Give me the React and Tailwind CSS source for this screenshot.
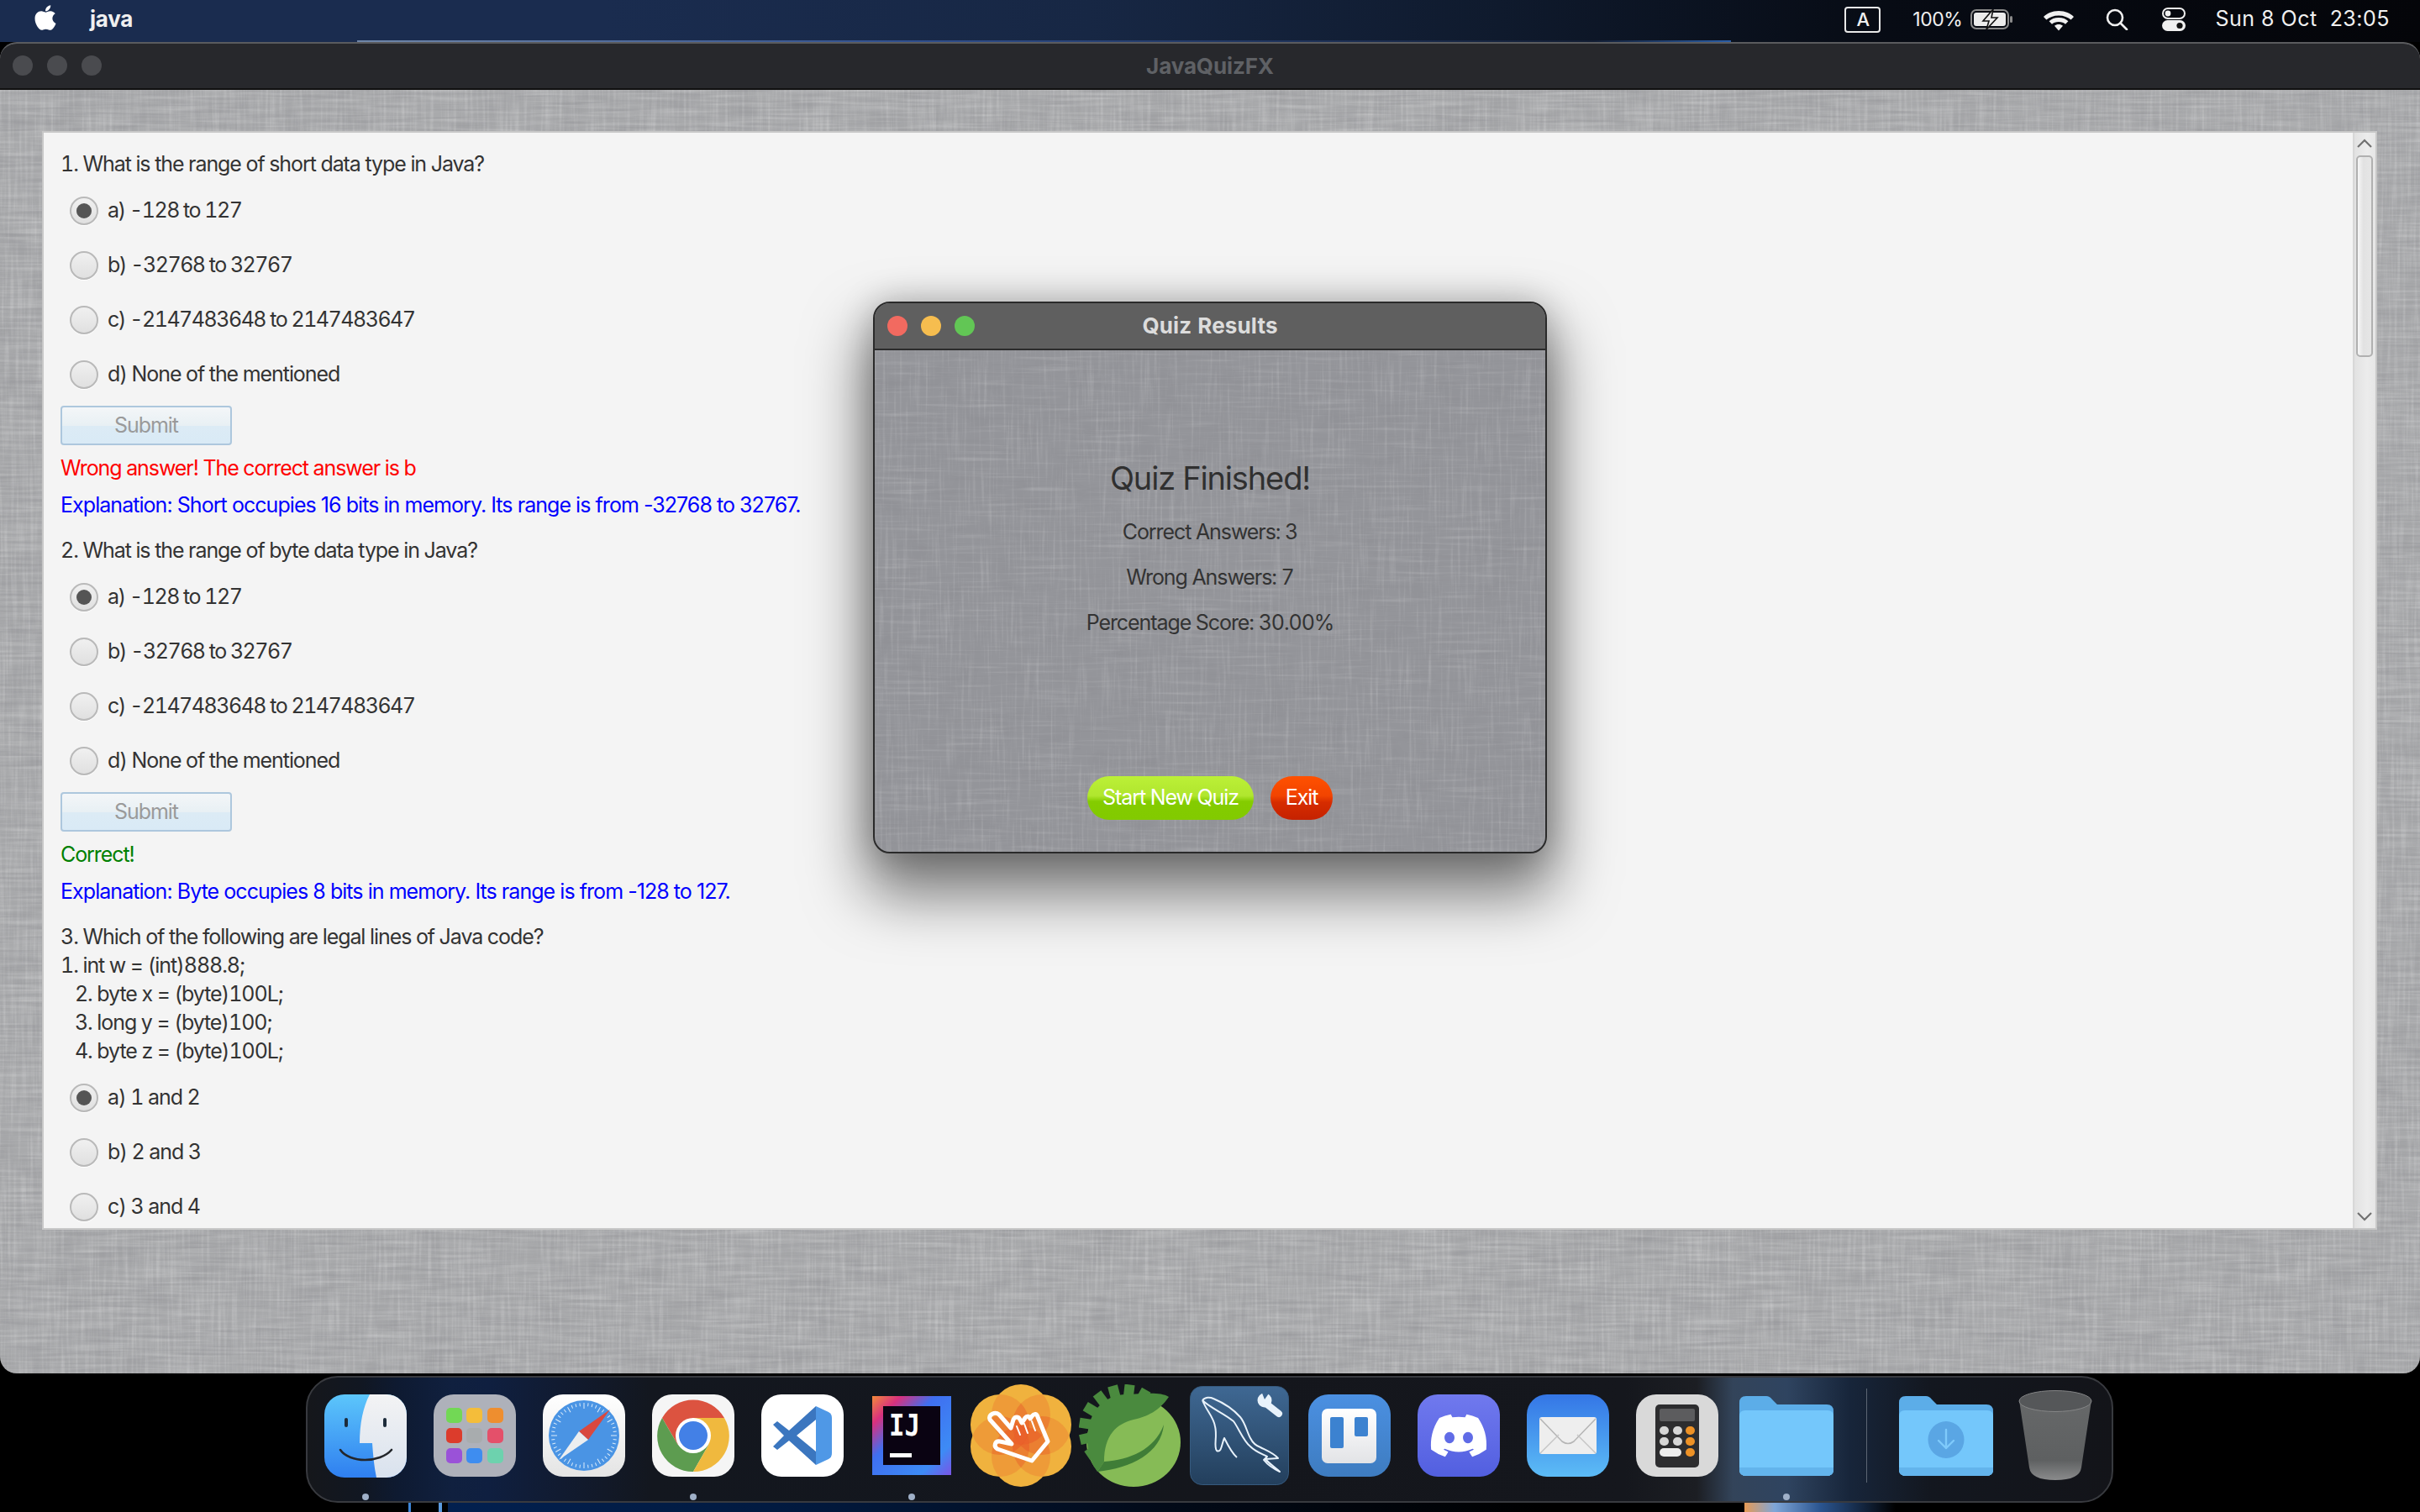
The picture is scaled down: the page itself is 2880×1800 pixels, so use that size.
import React, { useId } from "react";
import { FaApple, FaDiscord } from "react-icons/fa";

function Linen({ strength = 1 }) {
  const id = useId().replace(/:/g, "");
  const s = strength;
  return (
    <svg className="absolute inset-0 h-full w-full" aria-hidden="true">
      <filter id={id + "v"} x="0" y="0" width="100%" height="100%">
        <feTurbulence type="fractalNoise" baseFrequency="0.3 0.014" numOctaves="2" seed="4" />
        <feColorMatrix values={`0 0 0 0 1 0 0 0 0 1 0 0 0 0 1 ${0.42 * s} 0 0 0 -0.18`} />
      </filter>
      <filter id={id + "h"} x="0" y="0" width="100%" height="100%">
        <feTurbulence type="fractalNoise" baseFrequency="0.014 0.3" numOctaves="2" seed="9" />
        <feColorMatrix values={`0 0 0 0 0.25 0 0 0 0 0.25 0 0 0 0 0.27 ${0.7 * s} 0 0 0 -0.29`} />
      </filter>
      <filter id={id + "w"} x="0" y="0" width="100%" height="100%">
        <feTurbulence type="fractalNoise" baseFrequency="0.012 0.28" numOctaves="2" seed="21" />
        <feColorMatrix values={`0 0 0 0 1 0 0 0 0 1 0 0 0 0 1 ${0.42 * s} 0 0 0 -0.19`} />
      </filter>
      <filter id={id + "b"} x="0" y="0" width="100%" height="100%">
        <feTurbulence type="fractalNoise" baseFrequency="0.03 0.04" numOctaves="2" seed="2" />
        <feColorMatrix values={`0 0 0 0 0.2 0 0 0 0 0.2 0 0 0 0 0.22 ${0.4 * s} 0 0 0 -0.17`} />
      </filter>
      <rect width="100%" height="100%" filter={`url(#${id}b)`} />
      <rect width="100%" height="100%" filter={`url(#${id}v)`} />
      <rect width="100%" height="100%" filter={`url(#${id}h)`} />
      <rect width="100%" height="100%" filter={`url(#${id}w)`} />
    </svg>
  );
}

function Radio({ on, label }) {
  const numeric = /\d{3}/.test(label);
  return (
    <div className="flex h-[65px] items-center pl-[11px]">
      <div className="flex h-[34px] w-[34px] items-center justify-center rounded-full border-2 border-[#b9b9b9] bg-[linear-gradient(180deg,#f0f0f0,#e0e0e0)] shadow-[0_1px_0_#fff]">
        {on && <div className="h-[18px] w-[18px] rounded-full bg-[#555]" />}
      </div>
      <span className={numeric ? "ml-[11px] tracking-[-0.06em]" : "ml-[11px]"}>{label}</span>
    </div>
  );
}

function Question({ lines, opts, result, resultColor, explanation }) {
  return (
    <div className="mb-[19px]">
      {lines.map((l) => (
        <div key={l} className="h-[34px] whitespace-pre leading-[34px]">{l}</div>
      ))}
      <div className="mt-[6px]">
        {opts.map((o, i) => (
          <Radio key={o} on={i === 0} label={o} />
        ))}
      </div>
      {explanation && (
        <>
          <button className="mt-[5px] flex h-[47px] w-[204px] items-center justify-center rounded-[4px] border-2 border-[#adc7dd] bg-[linear-gradient(180deg,#f3f6f8_0%,#e8f0f4_50%,#dcebf5_52%,#d9eaf6_100%)] text-[#9a9a9a]">
            Submit
          </button>
          <div className={`mt-[10px] h-[34px] leading-[34px] ${resultColor}`}>{result}</div>
          <div className="mt-[10px] h-[34px] leading-[34px] tracking-[-0.038em] text-[#0000ff] [font-variant-numeric:normal]">{explanation}</div>
          <div className="h-[1px]" />
        </>
      )}
    </div>
  );
}

function Scrollbar() {
  return (
    <div className="relative w-[27px] shrink-0 border-l-2 border-[#d8d8d8] bg-[linear-gradient(90deg,#e2e2e2,#ececec_60%,#e6e6e6)]">
      <svg className="absolute left-[3px] top-[7px] h-[12px] w-[18px]" viewBox="0 0 18 12" fill="none" stroke="#707070" strokeWidth="2.2">
        <path d="M1 10 L9 2 L17 10" />
      </svg>
      <div className="absolute left-[2px] top-[27px] h-[240px] w-[20px] rounded-[5px] border-2 border-[#b0b0b0] bg-[linear-gradient(90deg,#f7f7f7,#e2e2e2_40%,#e6e6e6)]" />
      <svg className="absolute bottom-[8px] left-[3px] h-[12px] w-[18px]" viewBox="0 0 18 12" fill="none" stroke="#707070" strokeWidth="2.2">
        <path d="M1 2 L9 10 L17 2" />
      </svg>
    </div>
  );
}

function MenuBar() {
  return (
    <div className="flex h-[50px] shrink-0 items-center bg-[linear-gradient(90deg,#1a2c4f_0%,#1a2c4f_25%,#172744_45%,#0f1a2d_62%,#070b14_78%,#040509_100%)] pb-[4px] text-[#f0f0f0] [font-variant-numeric:normal]">
      <FaApple className="ml-[38px] h-[34px] w-[32px] -translate-y-[2px] text-white" />
      <span className="ml-[37px] text-[26px] font-bold leading-none tracking-[-0.01em]">java</span>
      <div className="ml-auto flex h-[31px] w-[43px] items-center justify-center rounded-[4px] border-2 border-[#e8e8e8] text-[22px] font-medium">A</div>
      <span className="ml-[38px] text-[23px] tracking-[-0.02em]">100%</span>
      <svg className="ml-[10px] h-[24px] w-[51px]" viewBox="0 0 51 24" fill="none">
        <rect x="1" y="1" width="44" height="22" rx="6" stroke="#8a8a8a" strokeWidth="2" />
        <rect x="4" y="4" width="38" height="16" rx="3" fill="#ececec" />
        <rect x="47" y="8" width="3" height="8" rx="1.5" fill="#8a8a8a" />
        <path d="M27 0 L15 14 H22 L19 24 L32 10 H25 Z" fill="#ececec" stroke="#111" strokeWidth="1.6" />
      </svg>
      <svg className="ml-[35px] h-[27px] w-[38px]" viewBox="0 0 38 27" fill="#f0f0f0">
        <path d="M19 3 C27 3 33 6 37 10 L33.6 13.6 C30 10.4 25 8.4 19 8.4 C13 8.4 8 10.4 4.4 13.6 L1 10 C5 6 11 3 19 3Z" />
        <path d="M19 11 C24 11 27.6 12.6 30.4 15.2 L27 18.8 C25 17 22.4 16 19 16 C15.6 16 13 17 11 18.8 L7.6 15.2 C10.4 12.6 14 11 19 11Z" />
        <path d="M19 19 C21 19 22.6 19.6 24 20.8 L19 26.4 L14 20.8 C15.4 19.6 17 19 19 19Z" />
      </svg>
      <svg className="ml-[37px] h-[26px] w-[27px]" viewBox="0 0 27 26" fill="none" stroke="#f0f0f0" strokeWidth="2.6">
        <circle cx="11" cy="11" r="9" />
        <path d="M17.5 17.5 L25 25" strokeLinecap="round" />
      </svg>
      <svg className="ml-[40px] h-[28px] w-[28px]" viewBox="0 0 28 28">
        <rect x="1" y="1" width="26" height="12" rx="6" fill="none" stroke="#f0f0f0" strokeWidth="2" />
        <circle cx="7" cy="7" r="3.4" fill="#f0f0f0" />
        <rect x="0" y="15" width="28" height="13" rx="6.5" fill="#f0f0f0" />
        <circle cx="21" cy="21.5" r="3.6" fill="#111" />
      </svg>
      <span className="ml-[35px] text-[25px] tracking-[0.02em]">Sun 8 Oct</span>
      <span className="ml-[15px] mr-[36px] text-[25px] tracking-[0.02em]">23:05</span>
    </div>
  );
}

function Squircle({ className, children }) {
  return <div className={`relative h-[98px] w-[98px] overflow-hidden rounded-[24px] ${className}`}>{children}</div>;
}

function Finder() {
  return (
    <svg width="98" height="99" viewBox="0 0 98 99">
      <defs>
        <linearGradient id="fa" x1="0" y1="0" x2="0" y2="1"><stop offset="0" stopColor="#5cc6fb" /><stop offset="1" stopColor="#2f7ff0" /></linearGradient>
        <linearGradient id="fb" x1="0" y1="0" x2="0" y2="1"><stop offset="0" stopColor="#f3f3f4" /><stop offset="1" stopColor="#d9e2ee" /></linearGradient>
      </defs>
      <rect width="98" height="99" rx="24" fill="url(#fa)" />
      <path d="M54 0 H74 A24 24 0 0 1 98 24 V75 A24 24 0 0 1 74 99 H62 C59 85 58 72 57 58 H42 C42 35 46 15 54 0Z" fill="url(#fb)" />
      <rect x="24" y="28" width="4" height="11" rx="2" fill="#1d2b3a" />
      <rect x="70" y="28" width="4" height="11" rx="2" fill="#1d2b3a" />
      <path d="M19 66 C30 82 66 82 80 66" fill="none" stroke="#23262b" strokeWidth="2.6" strokeLinecap="round" />
    </svg>
  );
}

function Launchpad() {
  const colors = ["bg-[#72d855]", "bg-[#f4bd3a]", "bg-[#ee8e2f]", "bg-[#dc3c2c]", "bg-[#a8acae]", "bg-[#e4506a]", "bg-[#9a52d8]", "bg-[#3e8df0]", "bg-[#6dd2ae]"];
  return (
    <Squircle className="bg-[#aeb1ba]">
      <div className="grid h-full grid-cols-3 content-center justify-center gap-x-[5px] gap-y-[6px] px-[15px]">
        {colors.map((c) => <div key={c} className={`h-[18px] w-[19px] rounded-[5px] ${c}`} />)}
      </div>
    </Squircle>
  );
}

function Safari() {
  const ticks = Array.from({ length: 48 }, (_, i) => i * 7.5);
  return (
    <Squircle className="bg-[linear-gradient(180deg,#ffffff,#e4e4e4)]">
      <svg width="98" height="98" viewBox="0 0 98 98">
        <circle cx="49" cy="49" r="42" fill="#4a94e4" />
        {ticks.map((t) => (
          <line key={t} x1="49" y1="10" x2="49" y2={t % 30 === 0 ? 17 : 14} stroke="#dcecfa" strokeWidth="1" transform={`rotate(${t} 49 49)`} />
        ))}
        <path d="M80 18 L43 44 L54 54 Z" fill="#d9483f" />
        <path d="M19 78 L43 44 L54 54 Z" fill="#eceef0" />
      </svg>
    </Squircle>
  );
}

function Chrome() {
  return (
    <Squircle className="bg-[#f5f5f5]">
      <svg width="98" height="98" viewBox="0 0 98 98">
        <path d="M86 28 A42.5 42.5 0 0 0 12 28 L30.7 60 L49 28 Z" fill="#dc5340" />
        <path d="M12 28 A42.5 42.5 0 0 0 49 92 L67.3 60 L30.7 60 Z" fill="#5d9c50" />
        <path d="M86 28 H49 L67.3 60 L49 92 A42.5 42.5 0 0 0 86 28Z" fill="#f0b93e" />
        <circle cx="49" cy="49" r="21" fill="#fff" />
        <circle cx="49" cy="49" r="17" fill="#4380e6" />
      </svg>
    </Squircle>
  );
}

function VSCode() {
  return (
    <Squircle className="bg-white">
      <svg width="98" height="98" viewBox="0 0 98 98">
        <path d="M65 14 L80 21 Q84 23 84 28 V70 Q84 75 80 77 L65 84 Z" fill="#4f98e6" />
        <path d="M65 14 L33 43 L19 32 L14 36 L27 49 L14 62 L19 66 L33 55 L65 84 L65 68 L42 49 L65 30 Z" fill="#3b76bf" />
      </svg>
    </Squircle>
  );
}

function IntelliJ() {
  return (
    <svg width="94" height="94" viewBox="0 0 94 94">
      <defs>
        <linearGradient id="ij" x1="0" y1="0" x2="1" y2="1">
          <stop offset="0" stopColor="#f28a3a" /><stop offset="0.18" stopColor="#d9317e" /><stop offset="0.4" stopColor="#3f6ff0" /><stop offset="0.8" stopColor="#3d8bf5" /><stop offset="1" stopColor="#7a55e6" />
        </linearGradient>
      </defs>
      <rect width="94" height="94" fill="url(#ij)" />
      <rect x="13" y="12" width="68" height="70" fill="#0a0312" />
      <text x="20" y="47" fill="#fff" fontFamily="'DejaVu Sans Mono',monospace" fontWeight="700" fontSize="36" textLength="37" lengthAdjust="spacingAndGlyphs" letterSpacing="0">IJ</text>
      <rect x="21" y="68" width="26" height="5" fill="#fff" />
    </svg>
  );
}

function Gesture() {
  const spots = [[61, 36], [86, 48], [86, 74], [61, 86], [36, 74], [36, 48]];
  return (
    <svg width="122" height="122" viewBox="0 0 122 122">
      <defs>
        {spots.map(([x, y], i) => (
          <clipPath key={i} id={`gc${i}`}><ellipse cx={x} cy={y} rx="35" ry="36" /></clipPath>
        ))}
      </defs>
      {spots.map(([x, y], i) => <ellipse key={i} cx={x} cy={y} rx="35" ry="36" fill="#f0b23e" />)}
      {spots.map(([x, y], i) =>
        spots.map(([x2, y2], j) =>
          j > i ? <ellipse key={`${i}-${j}`} cx={x2} cy={y2} rx="35" ry="36" fill="#e8602a" fillOpacity="0.28" clipPath={`url(#gc${i})`} /> : null
        )
      )}
      <path d="M24 42 C22 36 30 32 35 36 L49 52 L52 42 C54 38 58 38 60 42 L62 46 L66 40 C68 37 71 38 72 41 L74 38 C77 34 80 35 81 39 L93 68 L74 91 L33 77 C28 74 30 67 36 68 L50 71 Z" fill="none" stroke="#fff" strokeWidth="5" strokeLinejoin="round" />
      <path d="M56 50 L60 60 M65 47 L69 58 M74 44 L78 55" stroke="#fff" strokeWidth="2" strokeLinecap="round" />
    </svg>
  );
}

function Spring() {
  const teeth = [-125, -103, -81, -59, -37, -15, 7, 29];
  return (
    <svg width="122" height="122" viewBox="0 0 122 122">
      <ellipse cx="65" cy="69" rx="56" ry="53" fill="#86bb56" />
      {teeth.map((t) => (
        <rect key={t} x="48" y="0" width="12" height="18" fill="#4a8a3e" transform={`rotate(${t} 54 54)`} />
      ))}
      <path d="M107 15 C95 32 82 38 65 42 C45 47 30 60 30 92 L22 104 C10 88 8 70 12 50 C16 28 34 12 56 12 C75 12 95 8 107 15Z" fill="#4a8a3e" />
      <path d="M30 92 C60 90 90 78 101 48 C98 82 62 100 22 104 Z" fill="#3f7d37" />
    </svg>
  );
}

function MySQL() {
  return (
    <svg width="118" height="118" viewBox="0 0 118 118">
      <defs>
        <linearGradient id="my" x1="0" y1="0" x2="0" y2="1"><stop offset="0" stopColor="#3f6893" /><stop offset="1" stopColor="#233f5c" /></linearGradient>
      </defs>
      <rect x="0.5" y="0.5" width="117" height="117" rx="14" fill="url(#my)" stroke="#365a7e" />
      <path d="M15 17 C18 13 24 13 28 15 C40 20 52 28 60 37 C66 44 68 55 72 62 C75 68 78 71 84 73 C92 77 100 80 105 86 L90 87 C95 93 102 97 107 102 C98 98 92 93 88 88 L92 84 C84 80 78 78 72 72 C64 66 58 50 52 42 C40 32 24 26 15 17 M15 17 C20 30 28 36 30 48 C33 60 28 72 32 77 C38 80 38 68 41 62 C46 72 50 80 56 85" fill="none" stroke="#e8f2fb" strokeWidth="2" strokeLinejoin="round" />
      <line x1="92" y1="22" x2="106" y2="33" stroke="#e8f2fb" strokeWidth="8" strokeLinecap="round" />
      <circle cx="89" cy="17" r="8.5" fill="#e8f2fb" />
      <path d="M89 16 L85 6 H96 Z" fill="#3c6590" />
    </svg>
  );
}

function Trello() {
  return (
    <Squircle className="bg-[linear-gradient(180deg,#4b90e2,#3e7cc0)]">
      <div className="absolute left-[16px] top-[17px] flex h-[65px] w-[65px] justify-between rounded-[7px] bg-[linear-gradient(180deg,#ffffff,#e2e3e6)] p-[10px]">
        <div className="h-[37px] w-[16px] rounded-[2px] bg-[#3c82d0]" />
        <div className="h-[23px] w-[16px] rounded-[2px] bg-[#3c82d0]" />
      </div>
    </Squircle>
  );
}

function Discord() {
  return (
    <Squircle className="flex items-center justify-center bg-[linear-gradient(180deg,#7079ee,#525fe0)]">
      <FaDiscord className="h-[72px] w-[72px] text-white" />
    </Squircle>
  );
}

function Mail() {
  return (
    <Squircle className="bg-[linear-gradient(180deg,#3476e6,#5cbcf6)]">
      <svg width="98" height="98" viewBox="0 0 98 98">
        <rect x="15" y="27" width="68" height="44" rx="3" fill="#eeeeee" />
        <path d="M16 29 L42 56 Q49 61 56 56 L82 29" fill="none" stroke="#b5b5b5" strokeWidth="1.6" />
        <path d="M16 70 L38 48 M82 70 L60 48" fill="none" stroke="#c4c4c4" strokeWidth="1.4" />
      </svg>
    </Squircle>
  );
}

function Calculator() {
  return (
    <Squircle className="flex items-center justify-center bg-[#d9d9d9]">
      <div className="flex h-[75px] w-[52px] flex-col gap-[3px] rounded-[5px] bg-[#2d2d2f] p-[5px]">
        <div className="mb-[3px] h-[15px] rounded-[2px] bg-[#5c5c5e]" />
        <div className="flex justify-between"><i className="h-[10px] w-[11px] rounded-full bg-[#d6d6d6]" /><i className="h-[10px] w-[11px] rounded-full bg-[#d6d6d6]" /><i className="h-[10px] w-[11px] rounded-full bg-[#ee9226]" /></div>
        <div className="flex justify-between"><i className="h-[10px] w-[11px] rounded-full bg-[#d6d6d6]" /><i className="h-[10px] w-[11px] rounded-full bg-[#d6d6d6]" /><i className="h-[10px] w-[11px] rounded-full bg-[#ee9226]" /></div>
        <div className="flex justify-between"><i className="h-[10px] w-[26px] rounded-full bg-[#ececec]" /><i className="h-[10px] w-[11px] rounded-full bg-[#ee9226]" /></div>
      </div>
    </Squircle>
  );
}

function Folder({ download }) {
  return (
    <svg width="112" height="95" viewBox="0 0 112 95">
      <path d="M0 8 Q0 0 8 0 H32 Q36 0 39 4 L45 10 Q47 10 50 10 H104 Q112 10 112 18 V87 Q112 95 104 95 H8 Q0 95 0 87Z" fill="#5cade8" />
      <path d="M0 24 Q0 17 7 17 H105 Q112 17 112 24 V87 Q112 95 104 95 H8 Q0 95 0 87Z" fill="#74c7fb" />
      <path d="M0 85 H112 V87 Q112 95 104 95 H8 Q0 95 0 87Z" fill="#63b4ec" />
      {download && (
        <g>
          <ellipse cx="56" cy="52" rx="21.5" ry="22" fill="#5aa6e4" />
          <path d="M56 40 V62 M47 53 L56 62 L65 53" fill="none" stroke="#7fcafb" strokeWidth="2.4" strokeLinecap="round" strokeLinejoin="round" />
        </g>
      )}
    </svg>
  );
}

function Trash() {
  return (
    <svg width="88" height="108" viewBox="0 0 88 108">
      <defs>
        <linearGradient id="tr" x1="0" y1="0" x2="0" y2="1"><stop offset="0" stopColor="#666869" /><stop offset="0.75" stopColor="#5e6061" /><stop offset="1" stopColor="#8a8b8c" /></linearGradient>
      </defs>
      <path d="M1 12 L13 92 Q15 107 44 107 Q73 107 75 92 L87 12 Z" fill="url(#tr)" />
      <ellipse cx="44" cy="13" rx="43" ry="12.5" fill="#555759" stroke="#858687" strokeWidth="1" />
    </svg>
  );
}

const dockItems = [
  { el: <Finder />, ml: 20, dot: true },
  { el: <Launchpad />, ml: 32 },
  { el: <Safari />, ml: 32 },
  { el: <Chrome />, ml: 32, dot: true },
  { el: <VSCode />, ml: 32 },
  { el: <IntelliJ />, ml: 34, dot: true },
  { el: <Gesture />, ml: 22 },
  { el: <Spring />, ml: 8 },
  { el: <MySQL />, ml: 10 },
  { el: <Trello />, ml: 23 },
  { el: <Discord />, ml: 32 },
  { el: <Mail />, ml: 32 },
  { el: <Calculator />, ml: 32 },
  { el: <Folder />, ml: 25, dot: true },
  { el: <div className="h-[112px] w-[1px] bg-[#5c6673]" />, ml: 39 },
  { el: <Folder download />, ml: 38 },
  { el: <Trash />, ml: 30 },
];

function Dock() {
  return (
    <div className="relative ml-[364px] mt-[3px] flex h-[151px] w-[2151px] shrink-0 rounded-[38px] border-2 border-[#383a3f] bg-[linear-gradient(90deg,#15171b_0%,#111722_3%,#0e1a31_5%,#10203f_8%,#0f1f40_10%,#111b31_14%,#13171f_19%,#14161c_50%,#15171d_73%,#1c1e23_77%,#33445a_79%,#2f4460_82%,#17253a_85.5%,#13171f_90%,#131419_100%)]">
      {dockItems.map((it, i) => (
        <div key={i} className="relative flex h-full items-center pb-[9px]" style={{ marginLeft: it.ml }}>
          {it.el}
          {it.dot && <div className="absolute bottom-[1px] left-1/2 h-[8px] w-[8px] -translate-x-1/2 rounded-full bg-[#9fb0c8]" />}
        </div>
      ))}
    </div>
  );
}

function Dialog() {
  return (
    <div className="absolute left-[1039px] top-[359px] flex h-[657px] w-[802px] flex-col overflow-hidden rounded-[20px] border-2 border-[#2a2a2a] bg-[#94959a] shadow-[0_40px_70px_10px_rgba(0,0,0,0.5),0_0_40px_rgba(0,0,0,0.22)]">
      <div className="relative flex h-[56px] shrink-0 items-center justify-center border-b-2 border-[#2c2c2c] bg-[#5f5f5f] pb-[2px]">
        <div className="absolute left-[15px] top-[15px] flex gap-[16px]">
          <div className="h-[24px] w-[24px] rounded-full bg-[#f26a60]" />
          <div className="h-[24px] w-[24px] rounded-full bg-[#f6bd4f]" />
          <div className="h-[24px] w-[24px] rounded-full bg-[#62c655]" />
        </div>
        <span className="text-[26px] font-bold tracking-[0.005em] text-[#dcdcdc]">Quiz Results</span>
      </div>
      <div className="relative flex flex-1 flex-col items-center">
        <Linen strength={0.85} />
        <div className="relative mt-[128px] h-[48px] text-[38px] leading-[48px] tracking-[-0.03em] text-[#303030]">Quiz Finished!</div>
        <div className="relative mt-[23px] h-[34px] leading-[34px]">Correct Answers: 3</div>
        <div className="relative mt-[20px] h-[34px] leading-[34px]">Wrong Answers: 7</div>
        <div className="relative mt-[20px] h-[34px] leading-[34px]">Percentage Score: 30.00%</div>
        <div className="relative mt-[166px] flex gap-[20px] text-white">
          <div className="flex h-[52px] w-[198px] items-center justify-center rounded-full bg-[linear-gradient(180deg,#bcf037_0%,#b0e62e_45%,#84cc00_58%,#82ca00_100%)]">Start New Quiz</div>
          <div className="flex h-[52px] w-[74px] items-center justify-center rounded-full bg-[linear-gradient(180deg,#ff5100_0%,#f24400_45%,#d62c00_60%,#c52200_100%)]">Exit</div>
        </div>
      </div>
    </div>
  );
}

export default function App() {
  return (
    <div className="relative flex h-[1800px] w-[2880px] flex-col overflow-hidden bg-black font-['Inter','Noto_Sans',sans-serif] text-[25px] tracking-[-0.043em] tabular-nums text-[#333333]">
      <div className="absolute bottom-0 left-[533px] h-[12px] w-[1314px] bg-[linear-gradient(90deg,#02204f,#021a40_30%,#020a18_65%,#000)]" />
      <div className="absolute bottom-0 left-[486px] h-[12px] w-[3px] bg-[#3d86d8]" />
      <div className="absolute bottom-0 left-[522px] h-[12px] w-[4px] bg-[#5a9be0]" />
      <div className="absolute bottom-0 left-[2076px] h-[12px] w-[180px] bg-[linear-gradient(90deg,#e79a55,#7fa6d8_20%,#2b5590_50%,#000)]" />
      <MenuBar />
      <div className="absolute left-[425px] top-[48px] h-[2px] w-[1635px] bg-[linear-gradient(90deg,#6f86a8,#2f4f8f_40%,#121d33_90%,#2a5ea8)]" />
      <div className="relative flex h-[1585px] shrink-0 flex-col overflow-hidden rounded-[20px] border-t-2 border-[#5a5b5e] bg-[#a9aaac]">
        <div className="relative flex h-[55px] shrink-0 items-center justify-center border-b-2 border-[#111] bg-[#27282c] pb-[1px]">
          <div className="absolute left-[15px] top-[14px] flex gap-[17px]">
            <div className="h-[24px] w-[24px] rounded-full bg-[#4a4b4f]" />
            <div className="h-[24px] w-[24px] rounded-full bg-[#4a4b4f]" />
            <div className="h-[24px] w-[24px] rounded-full bg-[#4a4b4f]" />
          </div>
          <span className="text-[26px] font-bold tracking-[-0.005em] text-[#5f6165]">JavaQuizFX</span>
        </div>
        <div className="relative flex-1 pl-[50px] pt-[49px]">
          <Linen />
          <div className="relative flex h-[1308px] w-[2779px] overflow-hidden border-2 border-[#c8c8c8] bg-[#f4f4f4]">
            <div className="flex-1 overflow-hidden pl-[20px] pt-[20px]">
              <Question
                lines={["1. What is the range of short data type in Java?"]}
                opts={["a) -128 to 127", "b) -32768 to 32767", "c) -2147483648 to 2147483647", "d) None of the mentioned"]}
                result="Wrong answer! The correct answer is b"
                resultColor="text-[#ff0000]"
                explanation="Explanation: Short occupies 16 bits in memory. Its range is from -32768 to 32767."
              />
              <Question
                lines={["2. What is the range of byte data type in Java?"]}
                opts={["a) -128 to 127", "b) -32768 to 32767", "c) -2147483648 to 2147483647", "d) None of the mentioned"]}
                result="Correct!"
                resultColor="text-[#008000]"
                explanation="Explanation: Byte occupies 8 bits in memory. Its range is from -128 to 127."
              />
              <Question
                lines={["3. Which of the following are legal lines of Java code?", "1. int w = (int)888.8;", "   2. byte x = (byte)100L;", "   3. long y = (byte)100;", "   4. byte z = (byte)100L;"]}
                opts={["a) 1 and 2", "b) 2 and 3", "c) 3 and 4"]}
              />
            </div>
            <Scrollbar />
          </div>
        </div>
      </div>
      <Dock />
      <Dialog />
    </div>
  );
}
